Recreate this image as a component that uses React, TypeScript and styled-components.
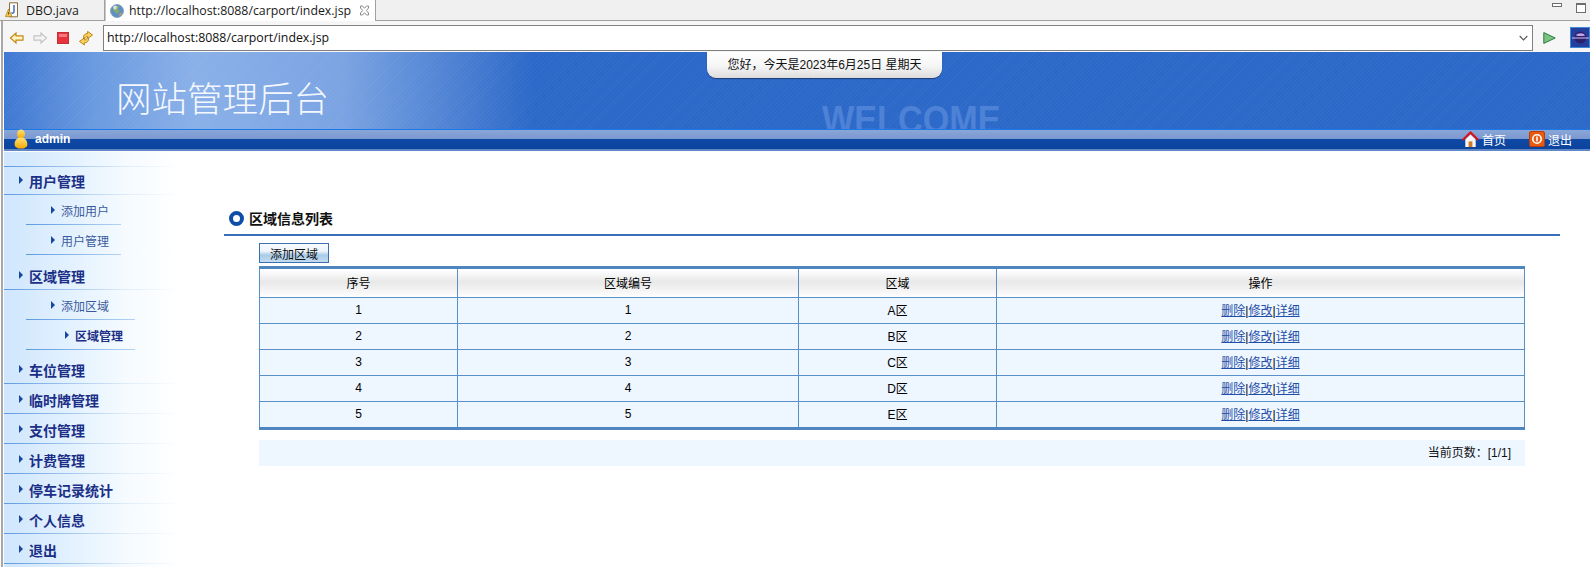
import React from 'react';
import styled, { createGlobalStyle } from 'styled-components';

const cjk = '"Liberation Sans", "Noto Sans CJK SC", sans-serif';

const GlobalStyle = createGlobalStyle`
  html, body {
    margin: 0;
    padding: 0;
    background: #fff;
    overflow: hidden;
  }
  body {
    font-family: ${cjk};
    font-size: 12px;
    color: #000;
  }
`;

const Page = styled.div`
  display: flex;
  flex-direction: column;
  width: 1590px;
  height: 567px;
  overflow: hidden;
`;

const TabStrip = styled.div`
  display: flex;
  height: 21px;
  flex: none;
  box-sizing: border-box;
  background: #f0f0f0;
  border-bottom: 1px solid #a0a0a0;
`;

const Tab = styled.div<{ $active?: boolean; $width: number }>`
  display: flex;
  align-items: center;
  box-sizing: border-box;
  width: ${p => p.$width}px;
  height: ${p => (p.$active ? 21 : 20)}px;
  padding-left: ${p => (p.$active ? 4 : 5)}px;
  gap: ${p => (p.$active ? 5 : 7)}px;
  background: ${p => (p.$active ? '#fff' : '#f0f0f0')};
  border-right: 1px solid #a0a0a0;
  border-left: ${p => (p.$active ? '1px solid #c8c8c8' : '0')};
  font-family: "Open Sans", "Noto Sans", sans-serif;
  font-size: 12.35px;
  color: #1a1a1a;
`;

const TabClose = styled.svg`
  margin-left: 3px;
`;

const WindowButtons = styled.div`
  display: flex;
  align-items: flex-start;
  gap: 14px;
  margin-left: auto;
  padding: 3px 4px 0 0;
`;

const Minimise = styled.div`
  width: 10px;
  height: 4px;
  box-sizing: border-box;
  border: 1px solid #6e6e6e;
  background: #fff;
`;

const Maximise = styled.div`
  width: 10px;
  height: 10px;
  box-sizing: border-box;
  border: 1px solid #6e6e6e;
  border-top-width: 2px;
  background: #fff;
`;

const Toolbar = styled.div`
  display: flex;
  align-items: center;
  flex: none;
  box-sizing: border-box;
  height: 31px;
  padding: 2px 0 0 9px;
  background: #f6f6f6;
  border-left: 2px solid #a8a8a8;
  margin-left: 1px;
`;

const ToolIcons = styled.div`
  display: flex;
  gap: 7px;
  width: 94px;
  flex: none;
  margin-left: -3px;
`;

const AddressBox = styled.div`
  display: flex;
  align-items: center;
  justify-content: space-between;
  flex: none;
  width: 1430px;
  height: 26px;
  box-sizing: border-box;
  padding: 0 4px 0 3px;
  background: #fff;
  border: 1px solid #808080;
  font-family: "Open Sans", "Noto Sans", sans-serif;
  font-size: 12.35px;
  color: #111;
`;

const GoIcon = styled.svg`
  flex: none;
  margin-left: 10px;
`;

const PerspectiveIcon = styled.svg`
  flex: none;
  margin-left: 14px;
`;

const Frame = styled.div`
  flex: 1;
  min-height: 0;
  display: flex;
  flex-direction: column;
  margin-left: 1px;
  padding-left: 1px;
  border-left: 2px solid #a8a8a8;
  box-sizing: border-box;
  background: #fff;
`;

const Header = styled.div`
  position: relative;
  flex: none;
  height: 77px;
  overflow: hidden;
  box-sizing: border-box;
  padding: 23px 0 0 112px;
  background:
    repeating-linear-gradient(135deg, rgba(255, 255, 255, 0.035) 0 1px, transparent 1px 3px),
    linear-gradient(90deg, #3f78d2 0, #6a9ae0 90px, #8ab0e8 190px, #7aa3e2 340px, #2c68c8 530px, #2c68c8 100%);
`;

const SiteTitle = styled.div`
  font-family: "Noto Sans CJK SC", sans-serif;
  font-size: 35.5px;
  font-weight: 300;
  line-height: 44px;
  color: #f4f8fe;
`;

const DatePill = styled.div`
  position: absolute;
  top: -1px;
  left: 703px;
  width: 235px;
  height: 27px;
  box-sizing: border-box;
  padding-top: 6px;
  text-align: center;
  font-size: 12px;
  line-height: 16px;
  color: #111;
  background: linear-gradient(180deg, #fff 0, #f6f6f6 55%, #dcdcdc 100%);
  border-radius: 0 0 9px 9px;
  box-shadow: 0 1px 1px #1d3f78;
`;

const Watermark = styled.div`
  position: absolute;
  left: 818px;
  top: 46px;
  font-family: "Liberation Sans", sans-serif;
  font-size: 38px;
  font-weight: bold;
  line-height: 44px;
  color: #4d82d6;
  transform: scaleX(0.9);
  transform-origin: left top;
`;

const NavBar = styled.div`
  display: flex;
  align-items: center;
  flex: none;
  height: 23px;
  box-sizing: border-box;
  padding: 0 18px 3px 10px;
  color: #fff;
  background: linear-gradient(
    180deg,
    #1a78e8 0,
    #1a78e8 1px,
    #8aa6d8 1px,
    #7a98d0 10px,
    #0e4aa6 10px,
    #0c439c 20px,
    #5f88c6 20px,
    #5f88c6 22px,
    #fff 22px
  );
`;

const UserName = styled.span`
  margin-left: 7px;
  font-size: 12px;
  font-weight: bold;
`;

const NavLink = styled.a<{ $first?: boolean }>`
  display: flex;
  align-items: center;
  gap: 3px;
  margin-left: ${p => (p.$first ? 'auto' : '23px')};
  color: #fff;
  font-size: 12px;
  text-decoration: none;
`;

const Body = styled.div`
  flex: 1;
  min-height: 0;
  display: flex;
`;

const Sidebar = styled.nav`
  flex: none;
  width: 176px;
  background: linear-gradient(90deg, #cfe6fd 0, #e4f2ff 70px, #f6fbff 125px, #fff 176px);
`;

const lineGradient = 'linear-gradient(90deg, #5c9ae0 0, #a9c9ee 70px, #e2eefa 125px, rgba(255,255,255,0) 176px) 1';

const SideTop = styled.div`
  height: 15px;
  box-sizing: border-box;
  border-bottom: 1px solid;
  border-image: ${lineGradient};
`;

const MenuItem = styled.div<{ $h?: number }>`
  display: flex;
  align-items: flex-end;
  gap: 6px;
  height: ${p => p.$h ?? 30}px;
  box-sizing: border-box;
  padding: 0 0 4px 15px;
  border-bottom: 1px solid;
  border-image: ${lineGradient};
  font-size: 14px;
  font-weight: bold;
  line-height: 16px;
  color: #1c2f86;
`;

const Arrow = styled.i`
  display: block;
  flex: none;
  width: 0;
  height: 0;
  margin-bottom: 6px;
  border-left: 4px solid #17479e;
  border-top: 4.5px solid transparent;
  border-bottom: 4.5px solid transparent;
`;

const SubList = styled.div`
  padding-bottom: 5px;
`;

const SubItem = styled.div<{ $active?: boolean; $w: number }>`
  display: flex;
  align-items: flex-end;
  gap: 6px;
  width: ${p => p.$w}px;
  height: 30px;
  margin-left: 22px;
  box-sizing: border-box;
  padding: 0 0 4px ${p => (p.$active ? 39 : 25)}px;
  border-bottom: 1px solid;
  border-image: linear-gradient(90deg, #5c9ae0, #b4d4f4) 1;
  font-size: 12px;
  font-weight: ${p => (p.$active ? 'bold' : 'normal')};
  line-height: 16px;
  color: ${p => (p.$active ? '#1c2f86' : '#3b5a9c')};
  white-space: nowrap;
`;

const Main = styled.main`
  flex: none;
  width: 1336px;
  margin-left: 44px;
  padding-top: 53px;
`;

const TitleRow = styled.div`
  display: flex;
  align-items: center;
  gap: 5px;
  height: 31px;
  box-sizing: border-box;
  padding: 0 0 3px 5px;
  border-bottom: 2px solid #3a6fb9;
  font-size: 14px;
  font-weight: bold;
  color: #111;
`;

const Ring = styled.span`
  width: 15px;
  height: 15px;
  box-sizing: border-box;
  border: 4px solid #0f4ea8;
  border-radius: 50%;
  background: #fff;
`;

const Content = styled.div`
  width: 1266px;
  margin-left: 35px;
`;

const AddButton = styled.button`
  display: block;
  width: 70px;
  height: 20px;
  margin: 7px 0 3px;
  padding: 0;
  border: 1px solid #3a70b0;
  background: linear-gradient(180deg, #f8fbff 0, #eef4fb 40%, #a8cbe8 62%, #c4dcf0 100%);
  font-family: ${cjk};
  font-size: 12px;
  color: #111;
`;

const Table = styled.table`
  width: 1266px;
  table-layout: fixed;
  border-collapse: collapse;
  border-top: 3px solid #4f86bf;
  border-bottom: 3px solid #4f86bf;
  border-left: 1px solid #4f86bf;
  border-right: 1px solid #4f86bf;
  font-size: 12px;
`;

const HeadCell = styled.th`
  height: 26px;
  padding: 0 0 2px;
  font-weight: normal;
  border: 1px solid #5a90c8;
  border-top: 0;
  background: linear-gradient(180deg, #fff 0, #e8e8e8 45%, #fff 100%);
`;

const Cell = styled.td`
  height: 23px;
  padding: 0 0 2px;
  text-align: center;
  background: #eef6ff;
  border: 1px solid #5a90c8;
`;

const ActionLink = styled.a`
  color: #1f4fa8;
  text-decoration: underline;
`;

const Pager = styled.div`
  height: 26px;
  margin-top: 10px;
  box-sizing: border-box;
  padding-right: 14px;
  background: #eef6ff;
  font-size: 12px;
  line-height: 26px;
  text-align: right;
  color: #111;
`;

const BackIcon = ({ muted }: { muted?: boolean }) => (
  <svg width="16" height="16" viewBox="0 0 16 16">
    <path
      d={muted ? 'M14.5 8 9 3v2.8H2v4.4h7V13z' : 'M1.5 8 7 3v2.8h7v4.4H7V13z'}
      fill={muted ? '#f4f4f4' : '#fff4c4'}
      stroke={muted ? '#c4c4c4' : '#c28a12'}
      strokeWidth="1.2"
    />
  </svg>
);

const StopIcon = () => (
  <svg width="16" height="16" viewBox="0 0 16 16">
    <rect x="2.5" y="2.5" width="11" height="11" fill="#e8323c" stroke="#c23038" />
    <rect x="4" y="4" width="8" height="3" fill="#f47a80" />
  </svg>
);

const refreshArrow = 'M5.5 8.5C5 5 7.2 3.6 9.6 3.6V1.4L14.6 5l-5 3.6V6.4C8.2 6.4 7.2 7.2 7 8.5z';

const RefreshIcon = () => (
  <svg width="16" height="16" viewBox="0 0 16 16" fill="#f8d260" stroke="#b77c10" strokeWidth="0.9">
    <path d={refreshArrow} />
    <path d={refreshArrow} transform="rotate(180 8 8.2)" />
  </svg>
);

const JavaFileIcon = () => (
  <svg width="14" height="16" viewBox="0 0 14 16">
    <path d="M4.5.8h8v14h-8z" fill="#fdfdfd" stroke="#8a6c3c" />
    <path d="M9 3v6.5c0 2-2 2-2.6 1" fill="none" stroke="#3a62b8" strokeWidth="1.4" />
    <path d="M3.6 7 7 14.6H.4z" fill="#f2c84a" stroke="#a87a1a" strokeWidth="0.7" />
    <rect x="3.2" y="10" width="0.9" height="2.6" fill="#5a3c10" />
  </svg>
);

const GlobeIcon = () => (
  <svg width="14" height="14" viewBox="0 0 14 14">
    <circle cx="7" cy="7" r="6.5" fill="#5f8fc4" stroke="#7f9ab4" strokeWidth="0.8" />
    <path d="M4 2.4c2-1 4-1 5 .4L7.6 5 9.4 7 7 10 5.4 8 3.2 6.4z" fill="#8aae5c" />
    <path d="M9.6 9.4 12 8.2 11 11l-2 1z" fill="#d0a050" />
    <circle cx="5" cy="3.4" r="2" fill="#e4eef8" opacity="0.8" />
  </svg>
);

const CloseIcon = () => (
  <TabClose width="11" height="11" viewBox="0 0 11 11">
    <path d="M1.5 1h2l2 2.3L7.5 1h2v2L7.4 5.5 9.5 8v2h-2l-2-2.3-2 2.3h-2V8l2.1-2.5L1.5 3z" fill="#fff" stroke="#8c8c8c" />
  </TabClose>
);

const Chevron = () => (
  <svg width="9" height="6" viewBox="0 0 9 6">
    <path d="M.7 1l3.8 4 3.8-4" fill="none" stroke="#555" strokeWidth="1.1" />
  </svg>
);

const UserIcon = () => (
  <svg width="14" height="20" viewBox="0 0 14 20">
    <defs>
      <linearGradient id="userFill" x1="0" y1="0" x2="0" y2="1">
        <stop offset="0" stopColor="#ffe27a" />
        <stop offset="1" stopColor="#f6a800" />
      </linearGradient>
    </defs>
    <ellipse cx="7" cy="5" rx="4" ry="4.6" fill="url(#userFill)" />
    <path d="M7 8.6c-4 0-6.4 3.4-6.4 6.6 0 3 3 4.4 6.4 4.4s6.4-1.4 6.4-4.4c0-3.2-2.4-6.6-6.4-6.6z" fill="url(#userFill)" />
  </svg>
);

const HomeIcon = () => (
  <svg width="17" height="17" viewBox="0 0 18 18">
    <path d="M3.5 9v8h11V9L9 4z" fill="#f6f6f6" />
    <rect x="7" y="11" width="4" height="6" fill="#d07a28" />
    <path d="M.8 9.4 9 1.6l8.2 7.8" fill="none" stroke="#d8101c" strokeWidth="2.2" />
  </svg>
);

const ExitIcon = () => (
  <svg width="16" height="16" viewBox="0 0 16 16">
    <rect x="0.5" y="0.5" width="15" height="15" rx="1.5" fill="#e85a10" stroke="#b84008" />
    <circle cx="8" cy="8" r="4.2" fill="none" stroke="#fff" strokeWidth="1.6" />
    <rect x="7.2" y="5.6" width="1.6" height="4.8" fill="#fff" />
  </svg>
);

const GoPlayIcon = () => (
  <GoIcon width="13" height="12" viewBox="0 0 13 12">
    <path d="M.8.6v10.8L12.2 6z" fill="#7cc47c" stroke="#2a7a48" />
  </GoIcon>
);

const EclipseIcon = () => (
  <PerspectiveIcon width="20" height="21" viewBox="0 0 20 21">
    <rect width="20" height="21" fill="#24409c" />
    <rect x="0.5" y="0.5" width="19" height="20" fill="none" stroke="#3f8ad8" />
    <circle cx="10.5" cy="10.5" r="6" fill="#2c1f6c" />
    <path d="M6 8.4c1-3 8-3 9 0-3 .8-6 .8-9 0z" fill="#c4a4e8" />
    <path d="M2 11h17" stroke="#d8c0f0" strokeWidth="1" />
  </PerspectiveIcon>
);

const areas = ['A', 'B', 'C', 'D', 'E'];
const simpleMenus = ['车位管理', '临时牌管理', '支付管理', '计费管理', '停车记录统计', '个人信息', '退出'];

const Menu = ({ label, h }: { label: string; h?: number }) => (
  <MenuItem $h={h}>
    <Arrow />
    {label}
  </MenuItem>
);

const Sub = ({ label, w, active }: { label: string; w: number; active?: boolean }) => (
  <SubItem $w={w} $active={active}>
    <Arrow />
    {label}
  </SubItem>
);

export default function App() {
  return (
    <Page>
      <GlobalStyle />
      <TabStrip>
        <Tab $width={105}>
          <JavaFileIcon />
          DBO.java
        </Tab>
        <Tab $active $width={271}>
          <GlobeIcon />
          http://localhost:8088/carport/index.jsp
          <CloseIcon />
        </Tab>
        <WindowButtons>
          <Minimise />
          <Maximise />
        </WindowButtons>
      </TabStrip>
      <Toolbar>
        <ToolIcons>
          <BackIcon />
          <BackIcon muted />
          <StopIcon />
          <RefreshIcon />
        </ToolIcons>
        <AddressBox>
          http://localhost:8088/carport/index.jsp
          <Chevron />
        </AddressBox>
        <GoPlayIcon />
        <EclipseIcon />
      </Toolbar>
      <Frame>
        <Header>
          <SiteTitle>网站管理后台</SiteTitle>
          <DatePill>您好，今天是2023年6月25日 星期天</DatePill>
          <Watermark>WELCOME</Watermark>
        </Header>
        <NavBar>
          <UserIcon />
          <UserName>admin</UserName>
          <NavLink $first>
            <HomeIcon />
            首页
          </NavLink>
          <NavLink>
            <ExitIcon />
            退出
          </NavLink>
        </NavBar>
        <Body>
          <Sidebar>
            <SideTop />
            <Menu label="用户管理" h={28} />
            <SubList>
              <Sub label="添加用户" w={95} />
              <Sub label="用户管理" w={95} />
            </SubList>
            <Menu label="区域管理" />
            <SubList>
              <Sub label="添加区域" w={109} />
              <Sub label="区域管理" w={109} active />
            </SubList>
            {simpleMenus.map((m, i) => (
              <Menu key={m} label={m} h={i === 0 ? 29 : 30} />
            ))}
          </Sidebar>
          <Main>
            <TitleRow>
              <Ring />
              区域信息列表
            </TitleRow>
            <Content>
              <AddButton type="button">添加区域</AddButton>
              <Table>
                <colgroup>
                  <col style={{ width: 198 }} />
                  <col style={{ width: 341 }} />
                  <col style={{ width: 198 }} />
                  <col />
                </colgroup>
                <thead>
                  <tr>
                    <HeadCell>序号</HeadCell>
                    <HeadCell>区域编号</HeadCell>
                    <HeadCell>区域</HeadCell>
                    <HeadCell>操作</HeadCell>
                  </tr>
                </thead>
                <tbody>
                  {areas.map((a, i) => (
                    <tr key={a}>
                      <Cell>{i + 1}</Cell>
                      <Cell>{i + 1}</Cell>
                      <Cell>{a}区</Cell>
                      <Cell>
                        <ActionLink href="#">删除</ActionLink>|<ActionLink href="#">修改</ActionLink>|
                        <ActionLink href="#">详细</ActionLink>
                      </Cell>
                    </tr>
                  ))}
                </tbody>
              </Table>
              <Pager>当前页数：[1/1]</Pager>
            </Content>
          </Main>
        </Body>
      </Frame>
    </Page>
  );
}
